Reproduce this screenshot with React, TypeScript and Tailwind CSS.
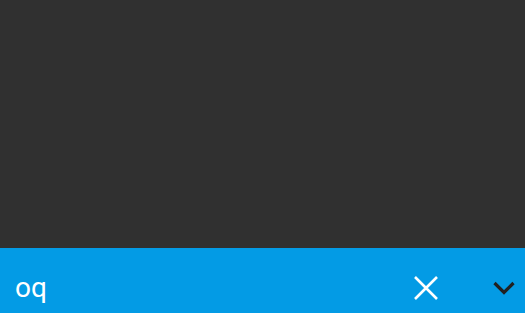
import React from "react";

export default function App() {
  return (
    <div className="w-[525px] h-[313px] overflow-hidden bg-[#303030] flex flex-col" style={{ fontFamily: "Roboto, 'Noto Sans', sans-serif" }}>
      <div className="h-[248px] shrink-0 bg-[#303030]" />
      <div className="h-[80px] shrink-0 bg-[#039be5] flex items-center">
        <div className="flex-1 pl-[15px] text-white text-[28px] leading-none">oq</div>
        <button className="w-[40px] h-[40px] flex items-center justify-center mr-[47px]">
          <svg width="24" height="24" viewBox="0 0 24 24">
            <path d="M1 1 L23 23 M23 1 L1 23" stroke="#ffffff" strokeWidth="2.6" fill="none" />
          </svg>
        </button>
        <div className="w-[22px] h-[14px] mr-[10px] flex items-center justify-center">
          <svg width="22" height="14" viewBox="0 0 22 14">
            <path d="M1.5 2 L11 11.5 L20.5 2" stroke="#212121" strokeWidth="3.2" fill="none" />
          </svg>
        </div>
      </div>
    </div>
  );
}
